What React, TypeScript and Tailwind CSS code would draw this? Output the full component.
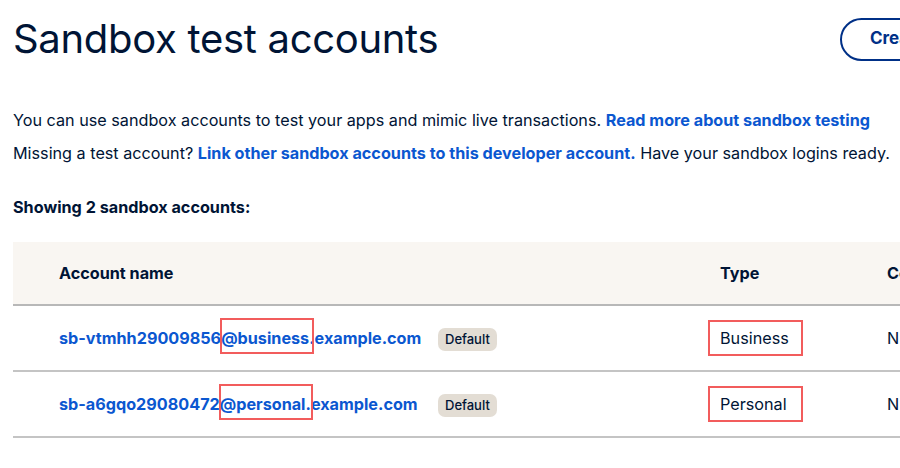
const accounts = [
  { user: 'sb-vtmhh29009856', domain: '@business.example.com', type: 'Business', country: 'NL' },
  { user: 'sb-a6gqo29080472', domain: '@personal.example.com', type: 'Personal', country: 'NL' },
]

export default function App() {
  return (
    <div className="w-[900px] h-[468px] overflow-hidden bg-white text-[#001435] font-['Inter',sans-serif]">
      <div className="pl-[13px]">
        <div className="flex items-center justify-between pt-[12px]">
          <h1 className="text-[40px] leading-[54px] tracking-[-0.3px]">Sandbox test accounts</h1>
          <button className="mr-[-163px] h-[43px] px-[28px] rounded-full border-2 border-[#003087] text-[#003087] text-[17px] font-bold whitespace-nowrap">
            Create test account
          </button>
        </div>

        <div className="mt-[38px] text-[16.2px] leading-[33px] whitespace-nowrap">
          <p>
            You can use sandbox accounts to test your apps and mimic live transactions.{' '}
            <a className="font-bold text-[#0b57d0]">Read more about sandbox testing</a>
          </p>
          <p>
            Missing a test account?{' '}
            <a className="font-bold text-[#0b57d0]">Link other sandbox accounts to this developer account.</a>{' '}
            Have your sandbox logins ready.
          </p>
        </div>

        <p className="mt-[25px] text-[16.2px] font-bold leading-[24px]">Showing 2 sandbox accounts:</p>

        <div className="mt-[23px] w-[1000px]">
          <div className="grid grid-cols-[425px_282px_167px_1fr] h-[64px] items-center bg-[#f9f6f2] border-b-2 border-[#b8b8b8] text-[16.2px] font-bold">
            <div className="pl-[46px]">Account name</div>
            <div />
            <div>Type</div>
            <div>Country</div>
          </div>
          {accounts.map((a) => (
            <div
              key={a.user}
              className="grid grid-cols-[425px_282px_167px_1fr] h-[66px] items-center border-b-2 border-[#c4c4c4] text-[16.2px]"
            >
              <div className="pl-[46px] font-bold text-[#0b57d0] whitespace-nowrap">
                {a.user}
                <span className="relative">
                  <span className="absolute left-[-1px] top-[-10px] w-[94px] h-[36px] border-2 border-[#f25c5c]" />
                </span>
                {a.domain}
              </div>
              <div>
                <span className="inline-block rounded-[7px] bg-[#e3ddd4] px-[7px] py-[3px] text-[13px] leading-[17px] font-medium">Default</span>
              </div>
              <div className="relative">
                <span className="absolute left-[-12px] top-1/2 -translate-y-1/2 w-[95px] h-[36px] border-2 border-[#f25c5c]" />
                {a.type}
              </div>
              <div>{a.country}</div>
            </div>
          ))}
        </div>
      </div>
    </div>
  )
}
